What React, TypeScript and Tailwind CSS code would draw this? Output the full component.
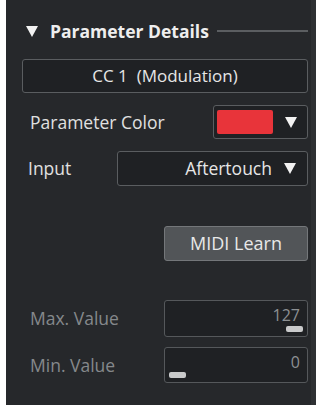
import React from 'react';

const Tri: React.FC<{ className?: string }> = ({ className }) => (
  <svg width="12" height="11" viewBox="0 0 12 11" className={className}>
    <polygon points="0,0 12,0 6,11" fill="#f2f2f2" />
  </svg>
);

const ValueField: React.FC<{ value: string; thumb: 'left' | 'right' }> = ({ value, thumb }) => (
  <div className="relative ml-auto h-full w-[144px] rounded-[3px] border border-[#55585b] bg-[#1f2124]">
    <span className="absolute right-[7px] top-[5px] text-[16px] leading-[19px] text-[#8d9093]">{value}</span>
    <div
      className={
        thumb === 'right'
          ? 'absolute bottom-[4px] right-[4px] h-[6px] w-[17px] rounded-[2px] bg-[#c9cacb]'
          : 'absolute bottom-[4px] left-[4px] h-[6px] w-[17px] rounded-[2px] bg-[#c9cacb]'
      }
    />
  </div>
);

const App: React.FC = () => {
  return (
    <div className="h-[409px] w-[323px] bg-white" style={{ fontFamily: '"Open Sans", "Liberation Sans", sans-serif' }}>
      <div className="ml-[6px] flex h-[405px] w-[310px] flex-col border-r-[5px] border-[#2e3033] bg-[#26282b] pl-[16px] pr-[3px]">
        {/* header */}
        <div className="mt-[20px] flex h-[22px] items-center">
          <Tri className="ml-[4px]" />
          <span className="ml-[12px] text-[17.5px] font-bold leading-[22px] text-[#eeeeee]">Parameter Details</span>
          <div className="ml-[8px] h-[2px] flex-1 bg-[#5b5e61]" />
        </div>

        <div className="mt-[17px] flex h-[34px] items-center justify-center rounded-[3px] border border-[#5a5d60] bg-[#1f2124] text-[17px] text-[#e6e6e6]">
          CC 1&nbsp;&nbsp;(Modulation)
        </div>

        <div className="mt-[12px] flex h-[34px] items-center">
          <span className="ml-[8px] text-[17.5px] text-[#e0e0e0]">Parameter Color</span>
          <div className="ml-auto flex h-full w-[95px] items-center rounded-[3px] border border-[#5a5d60] bg-[#1f2124] pl-[3px]">
            <div className="h-[24px] w-[56px] rounded-[2px] bg-[#e8343a]" />
            <Tri className="ml-[12px]" />
          </div>
        </div>

        <div className="mt-[12px] flex h-[35px] items-center">
          <span className="ml-[6px] text-[17.5px] text-[#e0e0e0]">Input</span>
          <div className="ml-auto flex h-full w-[191px] items-center justify-end rounded-[3px] border border-[#5a5d60] bg-[#1f2124] pr-[11px]">
            <span className="text-[17.5px] text-[#e6e6e6]">Aftertouch</span>
            <Tri className="ml-[12px]" />
          </div>
        </div>

        <div className="mt-[40px] flex h-[35px]">
          <div className="ml-auto flex h-full w-[144px] items-center justify-center rounded-[3px] border border-[#74777a] bg-[#525558] text-[18px] text-[#e8e8e8]">
            MIDI Learn
          </div>
        </div>

        <div className="mt-[39px] flex h-[37px] items-center">
          <span className="ml-[8px] text-[17.5px] text-[#85888b]">Max. Value</span>
          <ValueField value="127" thumb="right" />
        </div>

        <div className="mt-[10px] flex h-[36px] items-center">
          <span className="ml-[8px] text-[17.5px] text-[#85888b]">Min. Value</span>
          <ValueField value="0" thumb="left" />
        </div>
      </div>
    </div>
  );
};

export default App;
